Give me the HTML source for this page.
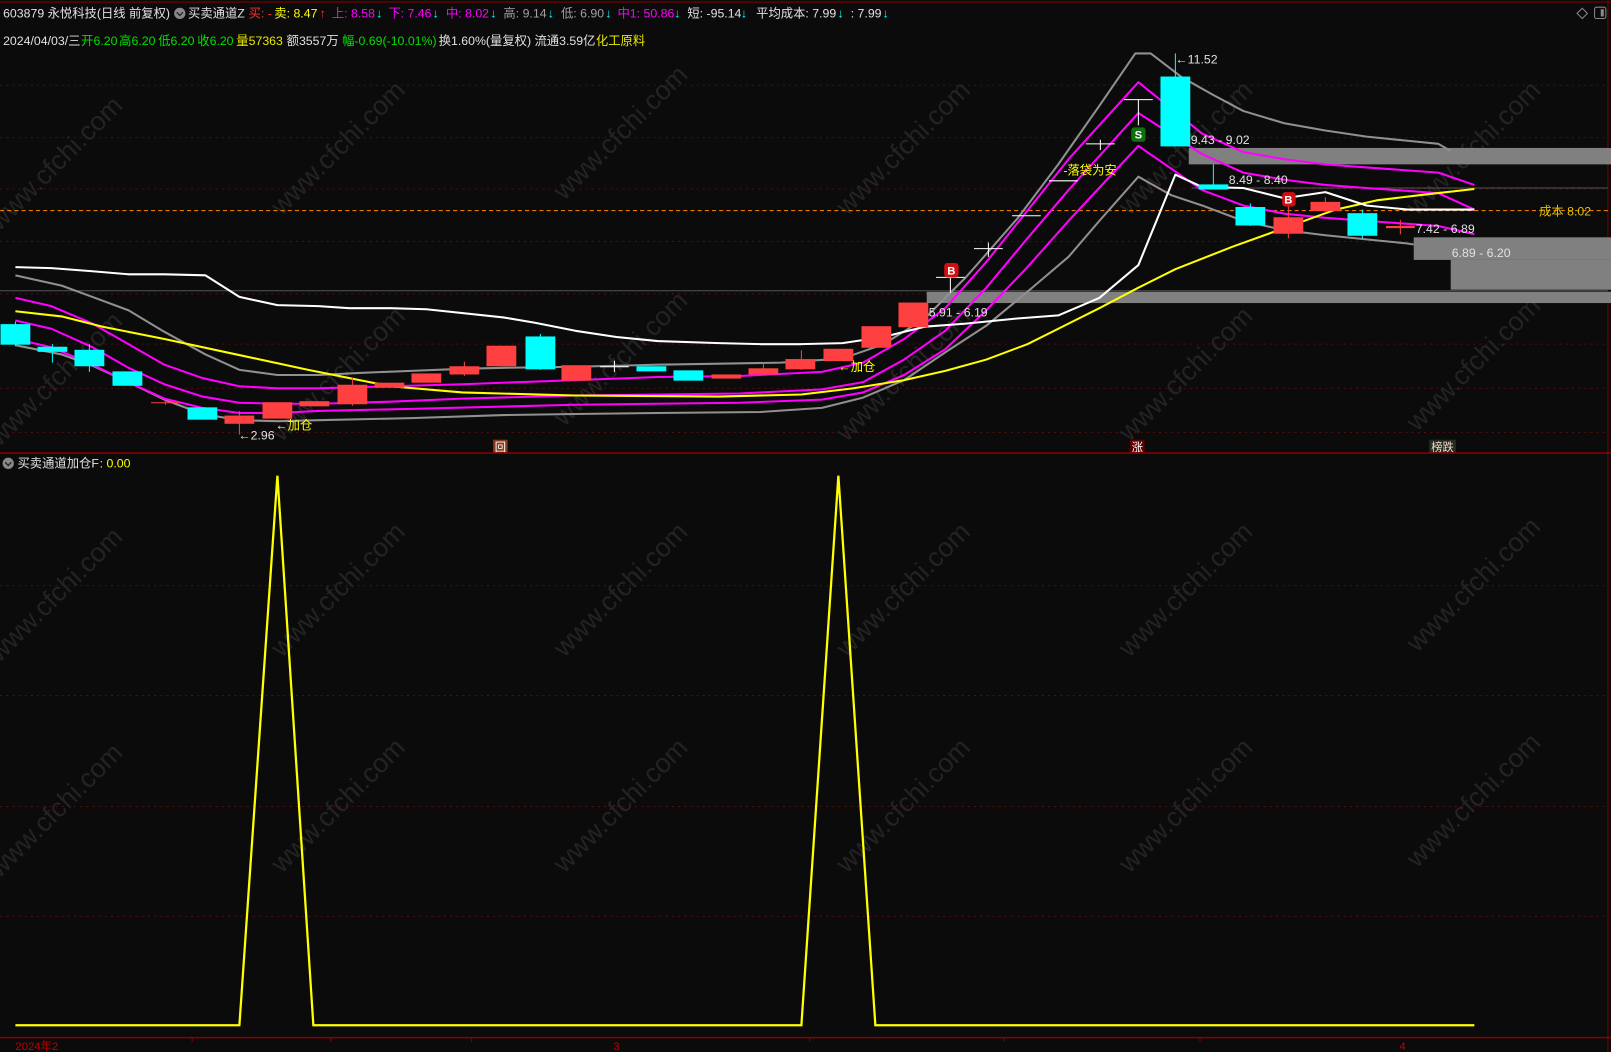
<!DOCTYPE html>
<html><head><meta charset="utf-8">
<style>
html,body{margin:0;padding:0;background:#0b0b0b;width:1611px;height:1052px;overflow:hidden}
svg{display:block}
text{font-family:"Liberation Sans","Noto Sans CJK SC",sans-serif}
</style></head><body>
<svg width="1611" height="1052" viewBox="0 0 1568 1024" preserveAspectRatio="none" xmlns="http://www.w3.org/2000/svg">
<rect width="1568" height="1024" fill="#0b0b0b"/>
<line x1="0" y1="2" x2="1568" y2="2" stroke="#7a0000" stroke-width="1"/>
<line x1="1565" y1="0" x2="1565" y2="1024" stroke="#7a0000" stroke-width="1"/>
<g stroke="#5a0a0a" stroke-width="1" stroke-dasharray="2,4">
<line x1="0" y1="83" x2="1565" y2="83"/><line x1="0" y1="134" x2="1565" y2="134"/>
<line x1="0" y1="184" x2="1565" y2="184"/><line x1="0" y1="235" x2="1565" y2="235"/>
<line x1="0" y1="286" x2="1565" y2="286"/><line x1="0" y1="335" x2="1565" y2="335"/>
<line x1="0" y1="378" x2="1565" y2="378"/><line x1="0" y1="421" x2="1565" y2="421"/>
<line x1="0" y1="570" x2="1565" y2="570"/><line x1="0" y1="677" x2="1565" y2="677"/>
<line x1="0" y1="785" x2="1565" y2="785"/><line x1="0" y1="892" x2="1565" y2="892"/>
</g>
<g fill="#232323" font-size="26" font-family="Liberation Sans,sans-serif">
<text transform="translate(60,165) rotate(-45)" text-anchor="middle">www.cfchi.com</text>
<text transform="translate(335,150) rotate(-45)" text-anchor="middle">www.cfchi.com</text>
<text transform="translate(610,135) rotate(-45)" text-anchor="middle">www.cfchi.com</text>
<text transform="translate(885,150) rotate(-45)" text-anchor="middle">www.cfchi.com</text>
<text transform="translate(1160,150) rotate(-45)" text-anchor="middle">www.cfchi.com</text>
<text transform="translate(1440,150) rotate(-45)" text-anchor="middle">www.cfchi.com</text>
<text transform="translate(60,375) rotate(-45)" text-anchor="middle">www.cfchi.com</text>
<text transform="translate(335,370) rotate(-45)" text-anchor="middle">www.cfchi.com</text>
<text transform="translate(610,355) rotate(-45)" text-anchor="middle">www.cfchi.com</text>
<text transform="translate(885,370) rotate(-45)" text-anchor="middle">www.cfchi.com</text>
<text transform="translate(1160,370) rotate(-45)" text-anchor="middle">www.cfchi.com</text>
<text transform="translate(1440,360) rotate(-45)" text-anchor="middle">www.cfchi.com</text>
<text transform="translate(60,585) rotate(-45)" text-anchor="middle">www.cfchi.com</text>
<text transform="translate(335,580) rotate(-45)" text-anchor="middle">www.cfchi.com</text>
<text transform="translate(610,580) rotate(-45)" text-anchor="middle">www.cfchi.com</text>
<text transform="translate(885,580) rotate(-45)" text-anchor="middle">www.cfchi.com</text>
<text transform="translate(1160,580) rotate(-45)" text-anchor="middle">www.cfchi.com</text>
<text transform="translate(1440,575) rotate(-45)" text-anchor="middle">www.cfchi.com</text>
<text transform="translate(60,795) rotate(-45)" text-anchor="middle">www.cfchi.com</text>
<text transform="translate(335,790) rotate(-45)" text-anchor="middle">www.cfchi.com</text>
<text transform="translate(610,790) rotate(-45)" text-anchor="middle">www.cfchi.com</text>
<text transform="translate(885,790) rotate(-45)" text-anchor="middle">www.cfchi.com</text>
<text transform="translate(1160,790) rotate(-45)" text-anchor="middle">www.cfchi.com</text>
<text transform="translate(1440,785) rotate(-45)" text-anchor="middle">www.cfchi.com</text>
</g>
<g font-size="12">
<text x="3" y="17" fill="#e0e0e0">603879 永悦科技(日线 前复权)</text>
<circle cx="175" cy="13" r="5.5" fill="#888"/><path d="M172 12 l3 3 l3 -3" stroke="#222" stroke-width="1.3" fill="none"/>
<text x="183" y="17" fill="#e0e0e0">买卖通道Z</text>
<text x="242" y="17" fill="#ff3030">买: -</text>
<text x="267" y="17" fill="#ffff00">卖: 8.47</text><text x="311" y="17" fill="#ff3030">↑</text>
<text x="323" y="17" fill="#ff00ff">上: 8.58</text><text x="366" y="17" fill="#00ffff">↓</text>
<text x="378" y="17" fill="#ff00ff">下: 7.46</text><text x="421" y="17" fill="#00ffff">↓</text>
<text x="434" y="17" fill="#ff00ff">中: 8.02</text><text x="477" y="17" fill="#00ffff">↓</text>
<text x="490" y="17" fill="#a0a0a0">高: 9.14</text><text x="533" y="17" fill="#00ffff">↓</text>
<text x="546" y="17" fill="#a0a0a0">低: 6.90</text><text x="589" y="17" fill="#00ffff">↓</text>
<text x="601" y="17" fill="#ff00ff">中1: 50.86</text><text x="656" y="17" fill="#00ffff">↓</text>
<text x="669" y="17" fill="#e0e0e0">短: -95.14</text><text x="721" y="17" fill="#00ffff">↓</text>
<text x="736" y="17" fill="#e0e0e0">平均成本: 7.99</text><text x="815" y="17" fill="#00ffff">↓</text>
<text x="828" y="17" fill="#e0e0e0">: 7.99</text><text x="859" y="17" fill="#00ffff">↓</text>
<text x="3" y="44" fill="#e0e0e0">2024/04/03/三</text>
<text x="79" y="44" fill="#00e000">开6.20</text>
<text x="116" y="44" fill="#00e000">高6.20</text>
<text x="154" y="44" fill="#00e000">低6.20</text>
<text x="192" y="44" fill="#00e000">收6.20</text>
<text x="230" y="44" fill="#e8e800">量57363</text>
<text x="279" y="44" fill="#e0e0e0">额3557万</text>
<text x="333" y="44" fill="#00e000">幅-0.69(-10.01%)</text>
<text x="427" y="44" fill="#e0e0e0">换1.60%(量复权) 流通3.59亿</text>
<text x="580" y="44" fill="#e8e800">化工原料</text>
</g>
<path d="M1540 8 l5 5 l-5 5 l-5 -5z" stroke="#888" fill="none"/>
<rect x="1552" y="7" width="11" height="11" rx="2" stroke="#888" fill="none"/><rect x="1558" y="9" width="3" height="7" fill="#888"/>

<line x1="0" y1="283" x2="1565" y2="283" stroke="#555" stroke-width="1"/>
<line x1="1160" y1="183" x2="1565" y2="183" stroke="#555" stroke-width="1"/>
<line x1="0" y1="205" x2="1565" y2="205" stroke="#ff8800" stroke-width="1" stroke-dasharray="4,3"/>
<text x="1498" y="210" fill="#e0c000" font-size="12">成本 8.02</text>

<g fill="#808080">
<rect x="1157" y="144" width="411" height="16"/>
<rect x="1376" y="231" width="192" height="22"/>
<rect x="1412" y="253" width="156" height="29"/>
<rect x="902" y="284" width="666" height="11"/>
</g>

<g fill="none" stroke-width="2" stroke-linejoin="round">
<polyline stroke="#909090" points="15,268 60,278 90,289 125,302 160,323 200,345 233,360 270,365 310,365 350,363 400,361 450,359 490,358 560,357 640,355 700,354 760,353 820,349 860,335 900,310 940,270 990,213 1030,160 1070,103 1105,52 1120,52 1150,75 1180,92 1210,108 1250,120 1290,127 1330,133 1370,137 1400,140 1412,147"/>
<polyline stroke="#909090" points="15,336 60,345 90,356 125,372 160,389 197,403 233,409 270,410 310,409 400,407 490,404 560,403 640,402 740,401 800,397 840,387 880,370 920,343 960,317 1000,284 1040,250 1070,215 1108,172 1140,190 1170,200 1210,215 1250,224 1290,229 1330,233 1370,237 1376,238"/>
<polyline stroke="#ff00ff" points="15,290 50,298 90,315 125,335 160,355 197,368 233,376 270,378 310,378 380,376 450,374 560,370 640,367 720,366 800,362 840,353 880,330 920,300 960,255 1000,205 1040,155 1108,80 1170,130 1210,148 1250,155 1290,160 1330,163 1400,168 1435,180"/>
<polyline stroke="#ff00ff" points="15,312 50,320 90,338 125,358 160,374 197,386 233,392 270,393 310,393 380,391 450,388 560,385 720,383 800,379 840,372 880,350 920,322 960,280 1000,232 1040,185 1108,110 1170,150 1210,168 1250,175 1290,180 1330,183 1400,188 1435,204"/>
<polyline stroke="#ff00ff" points="15,330 50,338 90,355 125,372 160,388 197,397 233,402 270,402 310,400 400,398 560,394 720,392 800,389 840,382 880,365 920,340 960,302 1000,260 1040,215 1108,142 1170,185 1210,200 1250,208 1290,212 1330,215 1400,220 1435,228"/>
<polyline stroke="#ffff00" points="15,303 60,308 100,318 160,330 230,345 300,360 380,376 450,382 560,385 700,386 780,384 830,378 880,370 920,361 960,350 1000,335 1040,315 1070,300 1108,280 1144,262 1200,240 1250,222 1300,204 1340,195 1390,189 1435,184"/>
<polyline stroke="#ffffff" points="15,260 50,261 90,264 125,267 160,267 200,268 233,289 270,297 310,298 340,300 380,300 415,301 490,309 520,314 560,322 600,328 640,332 700,334 740,335 780,335 820,334 860,328 900,318 940,315 990,310 1030,307 1070,290 1108,258 1144,170 1170,182 1210,183 1250,193 1290,187 1330,200 1370,204 1435,204"/>
</g>

<g stroke-width="1">
<g fill="#00ffff" stroke="#00ffff">
<line x1="15" y1="313" x2="15" y2="337"/><rect x="1" y="316" width="28" height="19"/>
<line x1="51" y1="335" x2="51" y2="353"/><rect x="37" y="338" width="28" height="4"/>
<line x1="87" y1="335" x2="87" y2="362"/><rect x="73" y="341" width="28" height="15"/>
<rect x="110" y="362" width="28" height="13"/>
<rect x="183" y="397" width="28" height="11"/>
<line x1="526" y1="325" x2="526" y2="360"/><rect x="512" y="328" width="28" height="31"/>
<rect x="620" y="357" width="28" height="4"/>
<rect x="656" y="361" width="28" height="9"/>
<line x1="1144" y1="52" x2="1144" y2="142"/><rect x="1130" y="75" width="28" height="67"/>
<line x1="1181" y1="160" x2="1181" y2="183"/><rect x="1167" y="180" width="28" height="4"/>
<line x1="1217" y1="198" x2="1217" y2="220"/><rect x="1203" y="202" width="28" height="17"/>
<line x1="1326" y1="204" x2="1326" y2="232"/><rect x="1312" y="208" width="28" height="21"/>
</g>
<g fill="#ff4040" stroke="#ff4040">
<line x1="147" y1="392" x2="175" y2="392"/><line x1="161" y1="389" x2="161" y2="394"/>
<line x1="233" y1="400" x2="233" y2="423"/><rect x="219" y="405" width="28" height="7"/>
<rect x="256" y="392" width="28" height="15"/>
<rect x="292" y="391" width="28" height="4"/>
<line x1="343" y1="368" x2="343" y2="395"/><rect x="329" y="375" width="28" height="18"/>
<rect x="365" y="373" width="28" height="4"/>
<rect x="401" y="364" width="28" height="8"/>
<line x1="452" y1="352" x2="452" y2="366"/><rect x="438" y="357" width="28" height="7"/>
<rect x="474" y="337" width="28" height="19"/>
<rect x="547" y="356" width="28" height="14"/>
<rect x="693" y="365" width="28" height="3"/>
<line x1="743" y1="353" x2="743" y2="365"/><rect x="729" y="359" width="28" height="5"/>
<line x1="780" y1="341" x2="780" y2="360"/><rect x="765" y="350" width="28" height="9"/>
<rect x="802" y="340" width="28" height="11"/>
<rect x="839" y="318" width="28" height="20"/>
<rect x="875" y="295" width="28" height="23"/>
<line x1="1254" y1="200" x2="1254" y2="232"/><rect x="1240" y="212" width="28" height="15"/>
<line x1="1290" y1="192" x2="1290" y2="207"/><rect x="1276" y="197" width="28" height="8"/>
<line x1="1349" y1="221" x2="1377" y2="221" stroke-width="2"/><line x1="1363" y1="214" x2="1363" y2="228"/>
</g>
<g stroke="#ffffff">
<line x1="584" y1="357" x2="612" y2="357"/><line x1="598" y1="351" x2="598" y2="362"/>
<line x1="911" y1="270" x2="939" y2="270"/><line x1="925" y1="270" x2="925" y2="285"/>
<line x1="948" y1="242" x2="976" y2="242"/><line x1="962" y1="236" x2="962" y2="250"/>
<line x1="985" y1="210" x2="1013" y2="210"/>
<line x1="1021" y1="176" x2="1049" y2="176"/>
<line x1="1057" y1="140" x2="1085" y2="140"/><line x1="1071" y1="136" x2="1071" y2="146"/>
<line x1="1094" y1="97" x2="1122" y2="97"/><line x1="1108" y1="97" x2="1108" y2="122"/>
</g>
</g>

<rect x="919" y="256" width="14" height="14" rx="3" fill="#d01010"/><text x="926" y="267" fill="#fff" font-size="11" text-anchor="middle" font-weight="bold">B</text>
<rect x="1248" y="187" width="13" height="14" rx="3" fill="#d01010"/><text x="1254" y="198" fill="#fff" font-size="11" text-anchor="middle" font-weight="bold">B</text>
<rect x="1101" y="124" width="14" height="14" rx="3" fill="#107010"/><text x="1108" y="135" fill="#fff" font-size="11" text-anchor="middle" font-weight="bold">S</text>

<g font-size="12" fill="#e0e0e0">
<text x="1144" y="62">←11.52</text>
<text x="1159" y="140">9.43 - 9.02</text>
<text x="1196" y="179">8.49 - 8.40</text>
<text x="1378" y="227">7.42 - 6.89</text>
<text x="1413" y="250">6.89 - 6.20</text>
<text x="904" y="308">5.91 - 6.19</text>
<text x="232" y="428">←2.96</text>
</g>
<g font-size="12" fill="#ffff00">
<text x="268" y="418">←加仓</text>
<text x="816" y="361">←加仓</text>
<text x="1035" y="170">-落袋为安</text>
</g>
<rect x="480" y="428" width="14" height="13" fill="#8a3a1a"/><text x="487" y="439" fill="#fff" font-size="11" text-anchor="middle">回</text>
<rect x="1100" y="428" width="14" height="13" fill="#600000"/><text x="1107" y="439" fill="#fff" font-size="11" text-anchor="middle">涨</text>
<rect x="1391" y="428" width="26" height="13" fill="#203020"/><text x="1404" y="439" fill="#ffd0d0" font-size="11" text-anchor="middle">榜跌</text>

<line x1="0" y1="441" x2="1568" y2="441" stroke="#8a0000" stroke-width="1.5"/>
<circle cx="8" cy="451" r="5.5" fill="#888"/><path d="M5 450 l3 3 l3 -3" stroke="#222" stroke-width="1.3" fill="none"/>
<text x="17" y="455" fill="#e0e0e0" font-size="12">买卖通道加仓F</text>
<text x="97" y="455" fill="#ffff00" font-size="12">: 0.00</text>

<polyline fill="none" stroke="#ffff00" stroke-width="2.2" points="15,998 233,998 270,463 305,998 780,998 816,463 852,998 1435,998"/>

<line x1="0" y1="1010" x2="1568" y2="1010" stroke="#8a0000" stroke-width="1.5"/>
<g stroke="#8a0000"><line x1="187" y1="1010" x2="187" y2="1014"/><line x1="322" y1="1010" x2="322" y2="1014"/><line x1="459" y1="1010" x2="459" y2="1014"/><line x1="788" y1="1010" x2="788" y2="1014"/><line x1="977" y1="1010" x2="977" y2="1014"/><line x1="1168" y1="1010" x2="1168" y2="1014"/></g>
<g fill="#c00000" font-size="11">
<text x="15" y="1022">2024年2</text>
<text x="597" y="1022">3</text>
<text x="1362" y="1022">4</text>
</g>
</svg>
</body></html>
